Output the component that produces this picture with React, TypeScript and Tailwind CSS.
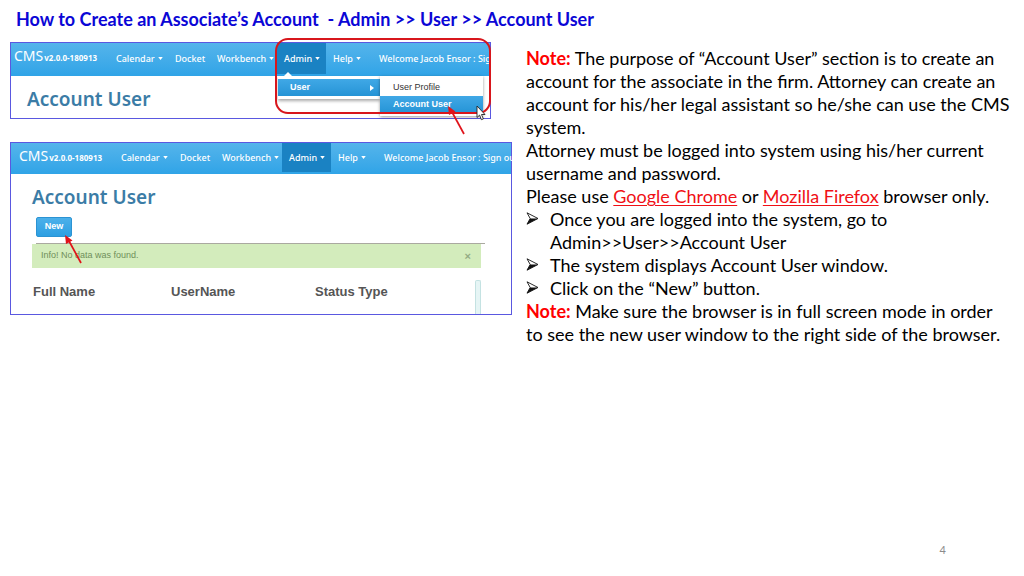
import type { ReactNode } from "react";
import clsx from "clsx";

const Caret = () => (
  <svg viewBox="0 0 6 4" className="h-[3px] w-[5px] shrink-0 fill-current" aria-hidden="true">
    <path d="M0 0h6L3 4z" />
  </svg>
);

type NavItemProps = {
  label: string;
  caret?: boolean;
  active?: boolean;
};

const NavItem = ({ label, caret, active }: NavItemProps) => (
  <a
    href="#"
    className={clsx(
      "flex items-center gap-[3px] whitespace-nowrap pl-[7px]",
      active && "bg-[#1a82c3]",
    )}
  >
    {label}
    {caret && <Caret />}
  </a>
);

const NavBar = ({ welcome, className }: { welcome: string; className: string }) => (
  <nav
    className={clsx(
      "grid shrink-0 grid-cols-[95px_59px_42px_67px_49px_46px_1fr] bg-linear-to-b from-[#54b4eb] to-[#2fa4e7] pb-0.5 font-['Noto_Sans',sans-serif] text-[9px] font-medium text-white",
      className,
    )}
  >
    <a href="#" className="flex items-baseline gap-px whitespace-nowrap leading-[26px]">
      <span className="text-[14px] font-normal">CMS</span>
      <span className="text-[8px] font-bold">v2.0.0-180913</span>
    </a>
    <NavItem label="Calendar" caret />
    <NavItem label="Docket" />
    <NavItem label="Workbench" caret />
    <NavItem label="Admin" caret active />
    <NavItem label="Help" caret />
    <NavItem label={welcome} />
  </nav>
);

const PointerArrow = ({ className }: { className: string }) => (
  <svg viewBox="0 0 20 30" className={clsx("absolute h-[30px] w-5", className)} aria-hidden="true">
    <path d="M18 29L6 7" stroke="#e0131a" strokeWidth="1.7" fill="none" />
    <path d="M2 1l7.5 5.5L3 10z" fill="#e0131a" />
  </svg>
);

const AdminMenu = () => (
  <div className="absolute left-[267px] top-[33px] flex items-start font-['Liberation_Sans',sans-serif] text-[9px]">
    <svg viewBox="0 0 8 4" className="absolute -top-1 left-1.5 h-1 w-2 fill-white" aria-hidden="true">
      <path d="M0 4L4 0l4 4z" />
    </svg>
    <div className="w-[102px] bg-white py-[3px] shadow-[0_2px_3px_#0005]">
      <a
        href="#"
        className="flex h-[17px] items-center justify-between bg-linear-to-b from-[#40a8e6] to-[#2494d6] pl-3 pr-1.5 font-bold text-white"
      >
        User
        <svg viewBox="0 0 4 6" className="h-1.5 w-1 fill-current" aria-hidden="true">
          <path d="M0 0v6l4-3z" />
        </svg>
      </a>
    </div>
    <div className="w-[103px] bg-white py-[3px] shadow-[0_1px_3px_#0006]">
      <a href="#" className="flex h-[17px] items-center pl-[13px] text-[#333]">
        User Profile
      </a>
      <a
        href="#"
        className="flex h-[17px] items-center bg-linear-to-b from-[#40a8e6] to-[#2494d6] pl-[13px] font-bold text-white"
      >
        Account User
      </a>
    </div>
  </div>
);

const PageTitle = () => (
  <h2 className="font-['Noto_Sans',sans-serif] text-[19px] font-semibold leading-7 text-[#3b7ca6]">
    Account User
  </h2>
);

const MenuFigure = () => (
  <figure className="relative mr-[21px] h-[77px] border border-[#5a58e0] bg-white">
    <NavBar welcome="Welcome Jacob Ensor : Sig" className="h-[33px] pl-[3px]" />
    <div className="px-4 pt-[9px]">
      <PageTitle />
    </div>
    <AdminMenu />
    <div className="absolute -right-px -top-[5px] h-[76px] w-[216px] rounded-[13px] border-2 border-[#d8161c]" />
    <svg viewBox="0 0 10 16" className="absolute left-[465px] top-[62px] h-4 w-2.5" aria-hidden="true">
      <path
        d="M1 1v11.5l2.6-2.4 1.8 4.6 2-.8-1.9-4.4H9z"
        fill="#fff"
        stroke="#222"
        strokeWidth="0.9"
      />
    </svg>
    <PointerArrow className="left-[435px] top-[62px]" />
  </figure>
);

const ListFigure = () => (
  <figure className="relative flex h-[173px] flex-col border border-[#5a58e0] bg-white">
    <NavBar welcome="Welcome Jacob Ensor : Sign ou" className="h-[31px] pl-2" />
    <div className="flex flex-1 flex-col pl-[21px] pr-[26px] pt-[9px]">
      <PageTitle />
      <button
        type="button"
        className="ml-1 mt-[6px] h-5 w-9 shrink-0 rounded-xs border border-[#2b93d3] bg-linear-to-b from-[#4bb0ea] to-[#2c9fe2] font-['Liberation_Sans',sans-serif] text-[9px] font-bold text-white"
      >
        New
      </button>
      <hr className="ml-1 mt-[6px] border-[#aaa9a0]" />
      <div className="mr-1 flex h-6 shrink-0 items-center justify-between bg-[#d3ecbc] pl-[9px] pr-2.5 font-['Liberation_Sans',sans-serif] text-[9px] text-[#6f8f5a]">
        <span>Info! No data was found.</span>
        <button type="button" aria-label="Close" className="text-[11px] font-bold text-[#93ab83]">
          ×
        </button>
      </div>
      <div className="mr-1 flex flex-1 justify-between pl-px pt-3">
        <table className="w-[420px] table-fixed self-start text-left font-['Liberation_Sans',sans-serif] text-[13px] leading-6 text-[#555]">
          <thead>
            <tr>
              <th className="w-[138px]">Full Name</th>
              <th className="w-[144px]">UserName</th>
              <th>Status Type</th>
            </tr>
          </thead>
        </table>
        <div className="w-1.5 rounded-t-xs border border-b-0 border-[#c4e2e2] bg-[#e6f5f5]" />
      </div>
    </div>
    <PointerArrow className="left-[52px] top-[91px]" />
  </figure>
);

const Bullet = ({ children }: { children: ReactNode }) => (
  <li className="flex">
    <svg viewBox="0 0 13 13" className="mr-[11px] mt-1 size-[13px] shrink-0" aria-hidden="true">
      <path d="M1 .8L12 6.5 1 12.2 4.2 6.5z" fill="#fff" stroke="#111" strokeWidth="0.9" />
      <path d="M4.2 6.5H12L1 12.2z" fill="#111" />
    </svg>
    <span>{children}</span>
  </li>
);

const Note = () => <strong className="font-bold text-[#f00]">Note:</strong>;

const BrowserLink = ({ children }: { children: string }) => (
  <a href="#" className="text-[#f01015] underline decoration-1 underline-offset-2">
    {children}
  </a>
);

export default function App() {
  return (
    <main className="flex min-h-screen flex-col bg-white font-['Lato',sans-serif] text-black">
      <h1 className="whitespace-pre pl-4 pt-2 text-[18px] font-bold leading-[23px] text-[#0b06d6]">
        {"How to Create an Associate’s Account  - Admin >> User >> Account User"}
      </h1>
      <div className="mt-[11px] flex items-start gap-3.5 pl-2.5 pr-3">
        <div className="flex w-[502px] shrink-0 flex-col gap-[23px]">
          <MenuFigure />
          <ListFigure />
        </div>
        <section className="mt-[5px] min-w-0 flex-1 whitespace-nowrap text-[18px] leading-[23px]">
          <p>
            <Note /> The purpose of “Account User” section is to create an
            <br />
            account for the associate in the firm. Attorney can create an
            <br />
            account for his/her legal assistant so he/she can use the CMS
            <br />
            system.
          </p>
          <p>
            Attorney must be logged into system using his/her current
            <br />
            username and password.
          </p>
          <p>
            Please use <BrowserLink>Google Chrome</BrowserLink> or{" "}
            <BrowserLink>Mozilla Firefox</BrowserLink> browser only.
          </p>
          <ul>
            <Bullet>
              Once you are logged into the system, go to
              <br />
              Admin&gt;&gt;User&gt;&gt;Account User
            </Bullet>
            <Bullet>The system displays Account User window.</Bullet>
            <Bullet>Click on the “New” button.</Bullet>
          </ul>
          <p>
            <Note /> Make sure the browser is in full screen mode in order
            <br />
            to see the new user window to the right side of the browser.
          </p>
        </section>
      </div>
      <footer className="mt-auto pb-[18px] pr-[78px] text-right text-[11px] leading-4 text-[#8b8b8b]">
        4
      </footer>
    </main>
  );
}
